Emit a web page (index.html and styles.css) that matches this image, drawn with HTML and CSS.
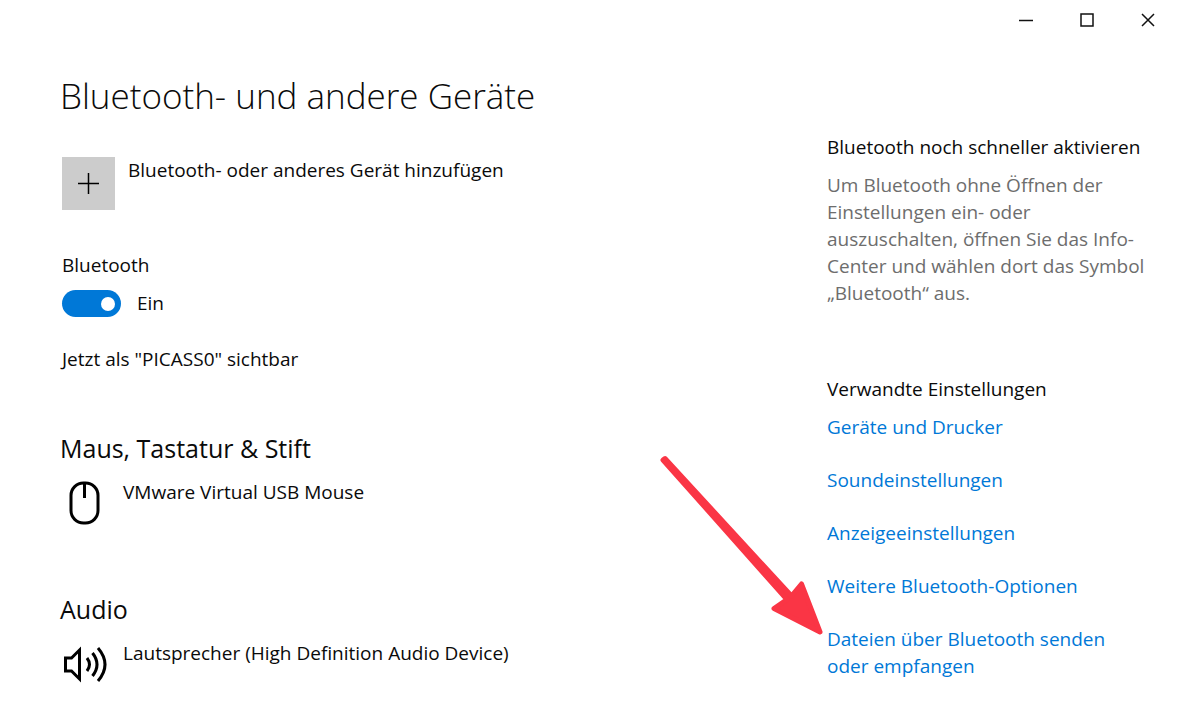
FILE: index.html
```html
<!DOCTYPE html>
<html lang="de">

<head>
  <meta charset="UTF-8" />
  <meta name="viewport" content="width=device-width, initial-scale=1.0" />
  <title>Einstellungen</title>
  <link rel="stylesheet" href="styles.css">
</head>

<body>
  <header class="titlebar">
    <button type="button" class="window-button" aria-label="Minimieren">
      <svg width="14" height="14" viewBox="0 0 14 14"><path d="M0 7.5h14" /></svg>
    </button>
    <button type="button" class="window-button" aria-label="Maximieren">
      <svg width="14" height="14" viewBox="0 0 14 14"><path d="M1 1h12v12H1z" /></svg>
    </button>
    <button type="button" class="window-button" aria-label="Schließen">
      <svg width="14" height="14" viewBox="0 0 14 14"><path d="M1 1l12 12M13 1L1 13" /></svg>
    </button>
  </header>

  <div class="page">
    <main class="content">
      <h1>Bluetooth- und andere Geräte</h1>

      <button type="button" class="add-device">
        <span class="add-icon">
          <svg width="21" height="21" viewBox="0 0 21 21"><path d="M0 10.5h21M10.5 0v21" /></svg>
        </span>
        <span>Bluetooth- oder anderes Gerät hinzufügen</span>
      </button>

      <div class="bluetooth">
        <label for="bluetooth-toggle">Bluetooth</label>
        <div class="toggle-row">
          <input type="checkbox" role="switch" id="bluetooth-toggle" class="toggle" checked />
          <span>Ein</span>
        </div>
        <p>Jetzt als "PICASS0" sichtbar</p>
      </div>

      <section class="devices">
        <h2>Maus, Tastatur &amp; Stift</h2>
        <div class="device">
          <svg class="device-icon" width="48" height="48" viewBox="0 0 48 48" aria-hidden="true">
            <rect x="9" y="4" width="27" height="40" rx="12.5" />
            <path d="M22.500 4v15" />
          </svg>
          <span>VMware Virtual USB Mouse</span>
        </div>
      </section>

      <section class="devices">
        <h2>Audio</h2>
        <div class="device">
          <svg class="device-icon" width="48" height="48" viewBox="0 0 48 48" aria-hidden="true">
            <path d="M3.500 18h6L17.500 10v29L9.500 31h-6z" />
            <path d="M25 18q5 6.500 0 13M30.500 13q9 11.500 0 23M36 8q14 16.500 0 33" />
          </svg>
          <span>Lautsprecher (High Definition Audio Device)</span>
        </div>
      </section>
    </main>

    <aside class="sidebar">
      <section class="tip">
        <h3>Bluetooth noch schneller aktivieren</h3>
        <p>Um Bluetooth ohne Öffnen der Einstellungen ein- oder auszuschalten, öffnen Sie das Info-Center und wählen dort das Symbol „Bluetooth“ aus.</p>
      </section>

      <section class="related">
        <h3>Verwandte Einstellungen</h3>
        <ul>
          <li><a href="#">Geräte und Drucker</a></li>
          <li><a href="#">Soundeinstellungen</a></li>
          <li><a href="#">Anzeigeeinstellungen</a></li>
          <li><a href="#">Weitere Bluetooth-Optionen</a></li>
          <li class="highlighted">
            <a href="#">Dateien über Bluetooth senden oder empfangen</a>
            <svg class="arrow" width="166" height="184" viewBox="0 0 166 184" aria-hidden="true">
              <path d="M2 4L4 2.500L130.500 140L140.500 128L159 176L113 152.500L126 143.500Z" />
            </svg>
          </li>
        </ul>
      </section>
    </aside>
  </div>
</body>

</html>
```
FILE: styles.css
```css
body {
  margin: 0;
  background-color: #fff;
  color: #0a0a0a;
  font-family: "Open Sans", "Noto Sans", sans-serif;
  font-size: 19px;
  line-height: 27px;
}

h1,
h2,
h3,
p,
ul {
  margin: 0;
  padding: 0;
}

button {
  border: none;
  background: none;
  padding: 0;
  color: inherit;
  font: inherit;
  cursor: pointer;
}

/* Window buttons */
.titlebar {
  display: flex;
  justify-content: flex-end;
  padding-right: 22px;
}

.window-button {
  display: flex;
  justify-content: center;
  align-items: center;
  width: 61px;
  height: 40px;
}

.window-button svg {
  fill: none;
  stroke: #111;
  stroke-width: 1.5;
}

/* Page layout */
.page {
  display: grid;
  grid-template-columns: 1fr 325px;
  column-gap: 40px;
  padding: 32px 48px 24px 62px;
}

h1,
h2 {
  margin-left: -2px;
}

h1 {
  margin-bottom: 37px;
  font-size: 35px;
  font-weight: 300;
  line-height: 48px;
}

h2 {
  margin-bottom: 13px;
  font-size: 25px;
  font-weight: 400;
  line-height: 36px;
}

h3 {
  margin-bottom: 11px;
  font-size: 19px;
  font-weight: 400;
}

/* Add device */
.add-device {
  display: flex;
  gap: 13px;
  margin-bottom: 42px;
  text-align: left;
}

.add-icon {
  display: flex;
  justify-content: center;
  align-items: center;
  width: 53px;
  height: 53px;
  background-color: #ccc;
}

.add-icon svg {
  stroke: #000;
  stroke-width: 1.5;
}

/* Bluetooth switch */
.bluetooth {
  margin-bottom: 57px;
}

.toggle-row {
  display: flex;
  align-items: center;
  gap: 16px;
  margin: 11px 0 29px;
}

.toggle {
  display: flex;
  justify-content: flex-end;
  align-items: center;
  appearance: none;
  box-sizing: border-box;
  width: 59px;
  height: 27px;
  margin: 0;
  padding: 0 6px;
  border-radius: 14px;
  background-color: #0078d7;
}

.toggle::before {
  content: "";
  width: 14px;
  height: 14px;
  border-radius: 50%;
  background-color: #fff;
}

.toggle:not(:checked) {
  justify-content: flex-start;
  background-color: #999;
}

/* Device lists */
.devices {
  margin-bottom: 64px;
}

.devices:last-child {
  margin-bottom: 0;
}

.device {
  display: flex;
  gap: 13px;
}

.device-icon {
  fill: none;
  stroke: #000;
  stroke-width: 3;
}

/* Right column */
.sidebar {
  padding-top: 62px;
}

.tip {
  margin-bottom: 69px;
}

.tip p {
  color: #6d6d6d;
}

.related ul {
  display: flex;
  flex-direction: column;
  gap: 26px;
  padding-right: 24px;
  list-style: none;
}

.related a {
  color: #0078d7;
  text-decoration: none;
}

.related a:hover {
  color: #666;
}

/* Arrow pointing at the last link */
.highlighted {
  position: relative;
}

.arrow {
  position: absolute;
  right: 100%;
  bottom: 40px;
  overflow: visible;
  fill: #fa3545;
  stroke: #fa3545;
  stroke-width: 5;
  stroke-linejoin: round;
  pointer-events: none;
}
```
